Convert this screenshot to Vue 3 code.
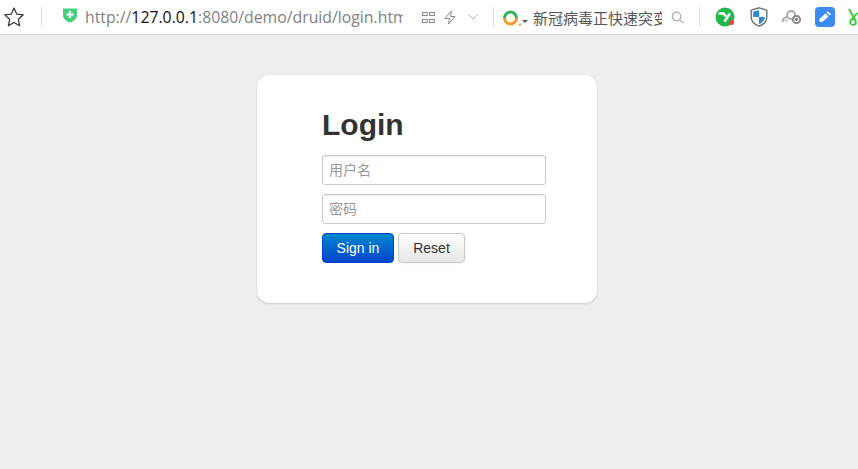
<script setup>
</script>

<template>
  <div class="page">
    <header class="bar">
      <svg class="star" width="22" height="22" viewBox="0 0 22 22"><path d="M11 2l2.700 6.100 6.600.7-5 4.400 1.400 6.500L11 16.400l-5.700 3.400 1.400-6.500-5-4.400 6.600-.7z" fill="none" stroke="#333" stroke-width="1.200" stroke-linejoin="round"/></svg>
      <i class="sep first"></i>
      <svg class="shield" width="14" height="16" viewBox="0 0 14 16"><path d="M0 1.500h14v7c0 3.500-3.500 5.800-7 7-3.500-1.200-7-3.500-7-7z" fill="#45d07f"/><path d="M7 4v7M3.500 7.500h7" stroke="#fff" stroke-width="2.200"/></svg>
      <div class="url"><span class="dim">http://</span><span class="host">127.0.0.1</span><span class="dim">:8080/demo/druid/login.htm</span></div>
      <svg class="qr" width="13" height="13" viewBox="0 0 13 13" fill="none" stroke="#8a8a8a"><rect x=".5" y="1.500" width="4.800" height="3"/><rect x="7.500" y="1.500" width="4.800" height="3"/><rect x=".5" y="8.500" width="4.800" height="3"/><rect x="7.500" y="8.500" width="4.800" height="3"/></svg>
      <svg class="bolt" width="12" height="15" viewBox="0 0 12 15"><path d="M7.500 1L1 8.500h4.500L4.500 14l6.500-7.500H6.500z" fill="none" stroke="#8a8a8a"/></svg>
      <svg class="chev" width="10" height="6" viewBox="0 0 10 6"><path d="M.5.500L5 5 9.500.5" fill="none" stroke="#aaa"/></svg>
      <i class="sep second"></i>
      <svg class="search-logo" width="19" height="17" viewBox="0 0 19 17"><path d="M1.500 8A6 6 0 0 1 13.500 8" fill="none" stroke="#2fb35a" stroke-width="3"/><path d="M1.500 8A6 6 0 0 0 13.500 8" fill="none" stroke="#f59a23" stroke-width="3"/><circle cx="17" cy="14.500" r="1.200" fill="#f59a23"/></svg>
      <i class="caret"></i>
      <div class="news">新冠病毒正快速突变</div>
      <svg class="loupe" width="13" height="13" viewBox="0 0 13 13" fill="none" stroke="#aaa" stroke-width="1.200"><circle cx="5.500" cy="5.500" r="4.300"/><path d="M8.700 8.700l3.500 3.500"/></svg>
      <i class="sep third"></i>
      <svg class="ext-y" width="20" height="20" viewBox="0 0 20 20"><circle cx="10" cy="10" r="9.500" fill="#22b84c"/><path d="M3.500 6.500h5l2.500 3M15 6.500l-5.500 8" fill="none" stroke="#fff" stroke-width="2.400"/><circle cx="16.500" cy="15.500" r="2.500" fill="#ee4040"/></svg>
      <svg class="ext-shield" width="18" height="20" viewBox="0 0 18 20"><path d="M9 .8l7.800 2.400v6.500c0 4.500-3.800 8-7.800 9.500-4-1.500-7.800-5-7.800-9.500V3.200z" fill="#fff" stroke="#66707c" stroke-width="1.400"/><path d="M9 3L3.200 4.800V10H9zM9 10v7.200c2.900-1.300 5.800-3.900 5.800-7.200z" fill="#2f86d8"/></svg>
      <svg class="ext-gear" width="21" height="16" viewBox="0 0 21 16" fill="none"><circle cx="10" cy="6" r="4" stroke="#aaa" stroke-width="2"/><path d="M1.500 13a5 5 0 0 1 5-5" stroke="#aaa" stroke-width="2"/><path d="M4.500 13a2 2 0 0 1 2-2" stroke="#bbb" stroke-width="1.500"/><circle cx="15.500" cy="10.500" r="3.600" fill="#fff" stroke="#8a8a8a" stroke-width="2"/><circle cx="15.500" cy="10.500" r="1.400" fill="#666"/></svg>
      <svg class="ext-note" width="20" height="20" viewBox="0 0 20 20"><rect width="20" height="20" rx="4" fill="#3d8bf0"/><path d="M4.500 12l6-5.500 3 3-6 5.300H4.500z" fill="#fff"/><path d="M11.500 5.500l1.500-1.300 3 3-1.500 1.300z" fill="#fff"/></svg>
      <svg class="ext-cut" width="10" height="18" viewBox="0 0 10 18" fill="none" stroke="#2fcf2f" stroke-width="1.800"><path d="M1 1l5.500 10M9.500 5L4 11"/><circle cx="5" cy="14" r="2.800"/></svg>
    </header>
    <main class="main">
      <form class="card" @submit.prevent>
        <h2 class="title">Login</h2>
        <input class="field" type="text" placeholder="用户名" />
        <input class="field" type="password" placeholder="密码" />
        <div class="actions">
          <button class="btn primary" type="submit">Sign in</button>
          <button class="btn plain" type="reset">Reset</button>
        </div>
      </form>
    </main>
  </div>
</template>

<style>
html, body { margin: 0; background: #eee; overflow: hidden; }
</style>

<style scoped>
.page {
  width: 858px;
  height: 469px;
  background: #eee;
  font-family: "Liberation Sans", "Noto Sans CJK SC", sans-serif;
  overflow: hidden;
}
.bar {
  height: 34px;
  background: #fff;
  border-bottom: 1px solid #d8d8d8;
  display: flex;
  align-items: center;
  overflow: hidden;
}
.bar > * { flex: none; }
.star { margin-left: 3px; }
.sep { width: 1px; height: 20px; background: #ddd; display: block; }
.sep.first { margin-left: 16px; }
.shield { margin-left: 21px; margin-top: -4px; }
.url {
  margin-left: 8px;
  width: 318px;
  overflow: hidden;
  white-space: nowrap;
  font-family: "Open Sans", "Liberation Sans", sans-serif;
  font-size: 15.800px;
}
.dim { color: #7f7f85; }
.host { color: #111; }
.qr { margin-left: 19px; }
.bolt { margin-left: 9px; }
.chev { margin-left: 12px; }
.sep.second { margin-left: 15px; }
.search-logo { margin-left: 9px; margin-top: 2px; }
.caret {
  display: block;
  width: 0;
  height: 0;
  border-left: 3px solid transparent;
  border-right: 3px solid transparent;
  border-top: 3px solid #555;
  margin: 8px 0 0 0;
}
.news {
  margin-left: 5px;
  width: 129px;
  overflow: hidden;
  white-space: nowrap;
  font-size: 15px;
  color: #555;
}
.loupe { margin-left: 9px; }
.sep.third { margin-left: 15px; }
.ext-y { margin-left: 15px; }
.ext-shield { margin-left: 15px; }
.ext-gear { margin-left: 13px; }
.ext-note { margin-left: 13px; }
.ext-cut { margin-left: 13px; }
.main {
  display: flex;
  justify-content: center;
  padding-top: 40px;
}
.card {
  box-sizing: border-box;
  flex: none;
  width: 340px;
  height: 228px;
  margin-left: -4px;
  background: #fff;
  border: 1px solid #fff;
  border-radius: 12px;
  box-shadow: 0 1px 2px rgba(0, 0, 0, .15);
  padding: 29px 51px 0 64px;
  display: flex;
  flex-direction: column;
  align-items: flex-start;
}
.title {
  margin: 0 0 10px;
  font-size: 30px;
  line-height: 40px;
  font-weight: 700;
  color: #333;
}
.field {
  box-sizing: border-box;
  width: 224px;
  height: 30px;
  margin: 0 0 9px;
  padding: 4px 6px;
  background: #fff;
  border: 1px solid #ccc;
  border-radius: 3px;
  box-shadow: inset 0 1px 1px rgba(0, 0, 0, .075);
  font-family: inherit;
  font-size: 14px;
}
.field::placeholder { color: #999; opacity: 1; }
.actions { display: flex; gap: 4px; }
.btn {
  box-sizing: border-box;
  height: 30px;
  padding: 0;
  border-radius: 4px;
  font-family: inherit;
  font-size: 14px;
}
.primary {
  width: 72px;
  color: #fff;
  border: 1px solid #04c;
  background: linear-gradient(#08c, #04c);
}
.plain {
  width: 67px;
  color: #333;
  border: 1px solid #c8c8c8;
  background: linear-gradient(#fff, #e6e6e6);
  box-shadow: 0 1px 2px rgba(0, 0, 0, .05);
}
</style>
